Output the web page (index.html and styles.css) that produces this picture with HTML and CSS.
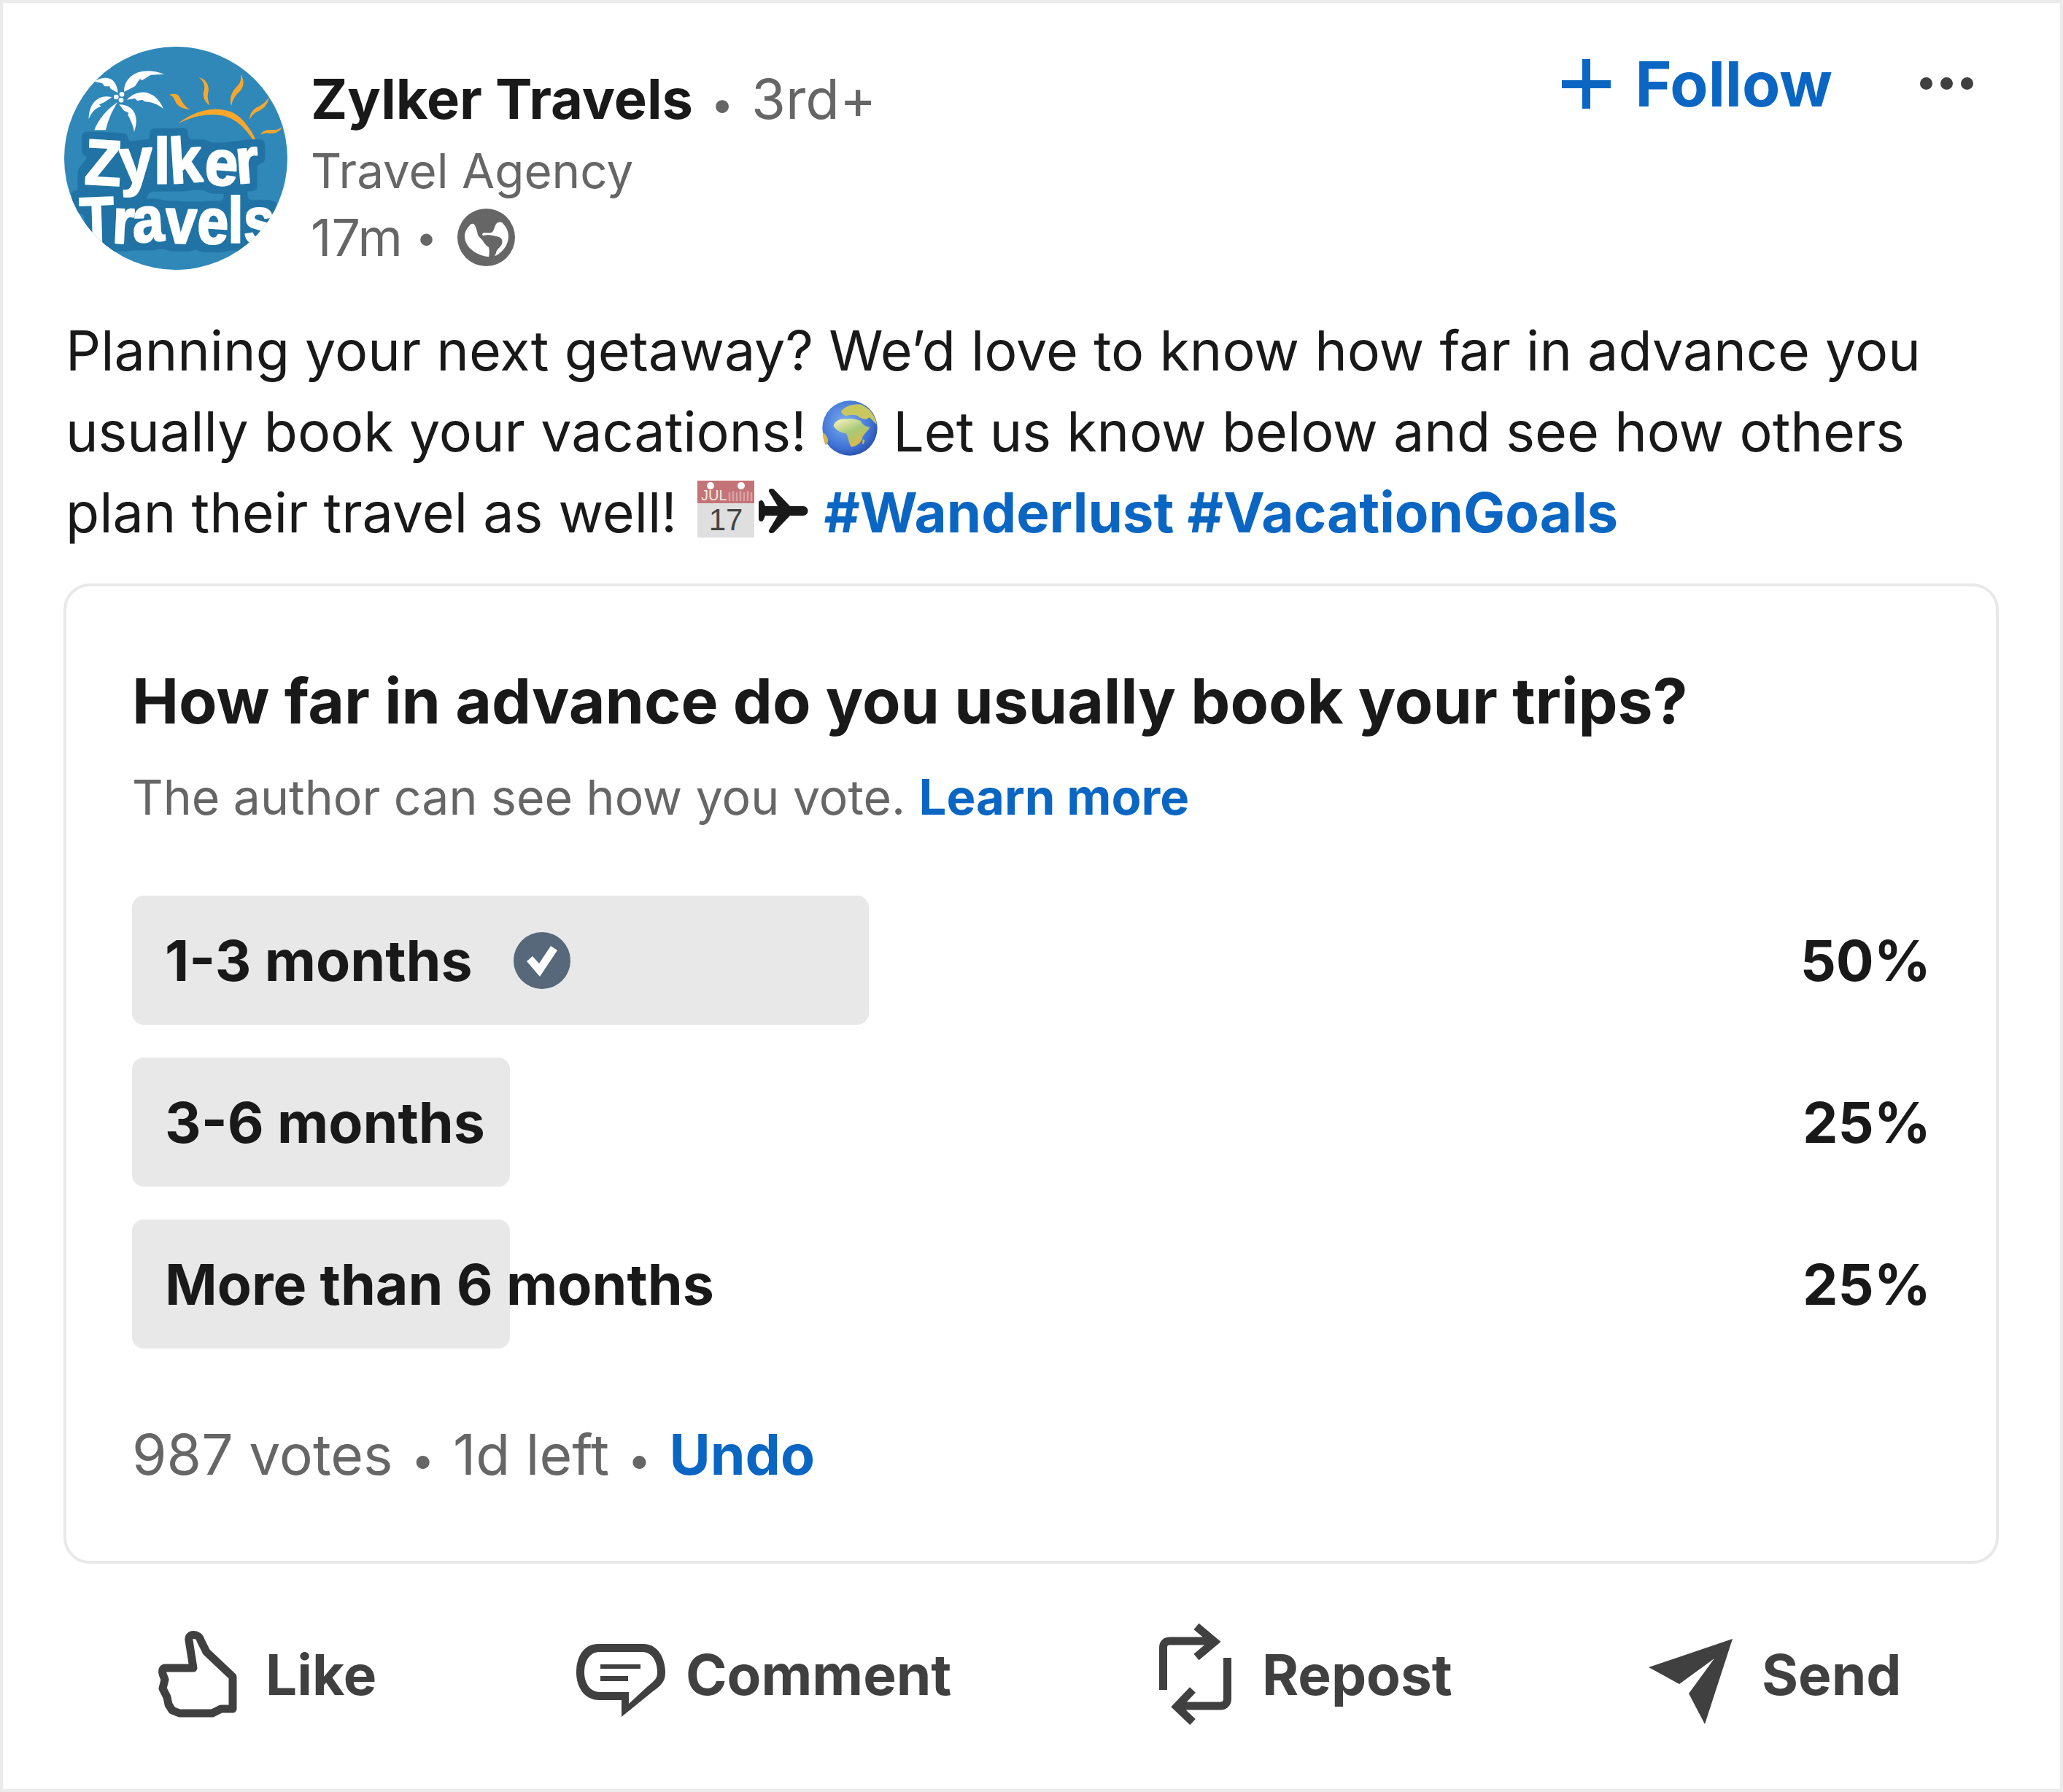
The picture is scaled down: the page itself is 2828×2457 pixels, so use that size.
FILE: index.html
```html
<!DOCTYPE html>
<html lang="en">
<head>
<meta charset="utf-8">
<title>Zylker Travels poll</title>
<link rel="stylesheet" href="styles.css">
</head>
<body>
<article class="card">
  <header class="head">
    <svg class="avatar" viewBox="84 72 918 918" aria-label="Zylker Travels logo">
      <defs>
        <clipPath id="disc"><circle cx="543" cy="531" r="459"/></clipPath>
        <filter id="chunky" filterUnits="userSpaceOnUse" x="0" y="300" width="1100" height="800" color-interpolation-filters="sRGB">
          <feMorphology in="SourceAlpha" operator="dilate" radius="4" result="fat"/>
          <feMorphology in="SourceAlpha" operator="dilate" radius="34" result="wide"/>
          <feGaussianBlur in="wide" stdDeviation="9" result="soft"/>
          <feComponentTransfer in="soft" result="halo"><feFuncA type="linear" slope="6" intercept="-2.5"/></feComponentTransfer>
          <feFlood flood-color="#2073a4" result="dark"/>
          <feComposite in="dark" in2="halo" operator="in" result="outline"/>
          <feFlood flood-color="#ffffff" result="light"/>
          <feComposite in="light" in2="fat" operator="in" result="face"/>
          <feMerge><feMergeNode in="outline"/><feMergeNode in="face"/></feMerge>
        </filter>
      </defs>
      <circle class="logo-bg" cx="543" cy="531" r="459"/>
      <g clip-path="url(#disc)">
        <g class="logo-white">
          <path d="M330 258C330 190 400 150 495 185L440 188 405 210 395 205 375 235Z"/>
          <path d="M305 262C300 210 270 180 205 215L240 222 250 235 270 235 275 245Z"/>
          <path d="M280 280C230 265 185 300 185 370 195 345 210 325 235 318L228 310 250 300Z"/>
          <path d="M342 290C390 240 460 250 492 327 470 310 440 298 415 298L405 290 385 295 375 285Z"/>
          <path d="M310 310C370 310 395 360 372 422 368 395 355 370 345 350L350 345 330 335Z"/>
          <path d="M303 300C260 330 225 370 208 415L255 415C265 370 280 340 303 300Z"/>
          <circle cx="298" cy="279" r="10"/><circle cx="321" cy="268" r="10"/><circle cx="318" cy="292" r="10"/>
        </g>
        <g class="logo-sun">
          <path d="M552 388C620 335 700 315 770 340 815 358 850 410 872 455L860 455C830 410 790 365 730 355 670 345 610 360 552 388Z"/>
          <path d="M515 270C560 255 560 290 570 300 580 315 590 325 602 330 575 330 550 320 540 295 535 280 525 272 515 270Z"/>
          <path d="M638 198C670 205 685 240 675 265 672 285 678 300 682 313 660 300 650 270 660 250 665 225 650 208 638 198Z"/>
          <path d="M810 185C830 215 820 245 800 262 785 275 775 295 772 315 760 285 775 255 795 235 810 220 812 205 810 185Z"/>
          <path d="M925 280C925 310 900 330 880 338 865 345 855 355 847 372 845 345 865 325 890 315 905 305 918 295 925 280Z"/>
          <path d="M982 400C970 425 945 432 925 428 912 426 900 430 892 434 900 415 925 412 945 415 960 415 972 410 982 400Z"/>
        </g>
        <text class="logo-word" x="150" y="878" textLength="800" lengthAdjust="spacingAndGlyphs" rotate="-2 3 -4 2 3 0 0">Travels</text>
        <text class="logo-word" x="165" y="636" textLength="725" lengthAdjust="spacingAndGlyphs" rotate="3 -3 0 -4 4 -5">Zylker</text>
      </g>
    </svg>
    <div class="who">
      <div class="name"><strong>Zylker Travels</strong><span class="sep">•</span><span class="degree">3rd+</span></div>
      <div class="role">Travel Agency</div>
      <div class="time">17m<span class="sep small">•</span>
        <svg class="earth" viewBox="0 0 79 79"><path fill-rule="evenodd" d="M39.500 0a39.500 39.500 0 1 0 0 79 39.500 39.500 0 0 0 0-79ZM17 23c2-3 5-3 7 0 2 4 3 8 4 13 2 4 6 6 8 10 2 3 4 5 7 7 1 4 1 9 0 13C27 65 10 53 10 38c0-6 3-11 7-15Zm37-3c3-2 7-2 8 0 5 5 8 11 8 18 0 10-6 20-16 26l-3 1 2-4c0-3 2-5 5-8 3-3 5-8 2-12-3-3-7-3-11-4-4-1-10-1-14 0-2-2 0-4 3-4 4 0 8 1 10-1 3-3 2-7 6-12Z"/></svg>
      </div>
    </div>
    <button class="follow">
      <svg class="plus" viewBox="0 0 67 68"><path d="M28 0h11v29h28v11H39v28H28V40H0V29h28Z"/></svg>Follow
    </button>
    <svg class="more" viewBox="0 0 73 17"><circle cx="8.500" cy="8.500" r="8.500"/><circle cx="36.500" cy="8.500" r="8.500"/><circle cx="64.500" cy="8.500" r="8.500"/></svg>
  </header>

  <div class="post">
    <p class="line">Planning your next getaway? We’d love to know how far in advance you</p>
    <p class="line">usually book your vacations!
    <svg class="emoji globe" viewBox="692 95 228 230">
      <defs>
        <radialGradient id="sea" cx="42%" cy="40%" r="64%"><stop offset="0" stop-color="#7fb0ee"/><stop offset=".72" stop-color="#3f72d6"/><stop offset="1" stop-color="#2a4fa8"/></radialGradient>
        <linearGradient id="land" x1="0" y1="0" x2=".6" y2="1"><stop offset="0" stop-color="#fdf8c0"/><stop offset=".55" stop-color="#a8c878"/><stop offset="1" stop-color="#dcb94a"/></linearGradient>
      </defs>
      <circle cx="806" cy="210" r="114" fill="url(#sea)"/>
      <path fill="url(#land)" d="M738 200C745 180 765 170 790 172 810 168 830 172 850 180 858 195 870 205 890 205 880 225 862 235 858 250 855 270 830 288 812 288 800 270 800 245 790 232 770 228 750 222 738 200Z"/>
      <path fill="#c8c85e" d="M770 140C785 120 820 108 850 112 885 125 910 155 918 195 905 185 895 170 885 165 875 180 860 170 845 165 835 150 800 155 790 160 780 155 770 150 770 140Z"/>
      <path fill="#d6b84c" d="M694 228C705 232 715 250 716 262 712 275 708 285 704 278 697 262 693 245 694 228Z"/>
      <path fill="#d6b84c" d="M860 256l8 4-5 16-6-2Z"/>
    </svg>
    Let us know below and see how others</p>
    <p class="line">plan their travel as well!
    <svg class="emoji cal" viewBox="0 0 78 78">
      <rect width="78" height="78" fill="#dfdfdf"/><rect width="78" height="31" fill="#c47378"/>
      <circle cx="18" cy="7" r="5" fill="#fff"/><circle cx="60" cy="7" r="5" fill="#fff"/>
      <text class="cal-month" x="5" y="27">JUL</text>
      <path d="M44 28V16M49 28V14M54 28V16M59 28V14M64 28V16M69 28V14M74 28V16" stroke="#d9a3a5" stroke-width="2.500"/>
      <text class="cal-day" x="39" y="68">17</text>
    </svg><svg class="emoji plane" viewBox="0 0 69 63"><path d="M2 18C4 16 7 17 8 20L10 25H27L15 5C14 1 19 0 22 2L44 25H62C66 25 68.500 28 68.500 31.500 68.500 35 66 38 62 38H44L22 61C19 63 14 62 15 58L27 38H10L8 43C7 46 4 47 2 45 1 44 1 43 1 42V21C1 20 1 19 2 18Z"/></svg>
    <a class="tag">#Wanderlust #VacationGoals</a></p>
  </div>

  <section class="poll">
    <h2 class="question">How far in advance do you usually book your trips?</h2>
    <p class="note">The author can see how you vote. <a class="link">Learn more</a></p>
    <div class="options">
      <div class="option">
        <span class="fill" style="width:1010px"></span>
        <span class="label">1-3 months</span>
        <svg class="check" viewBox="0 0 78 78"><circle cx="39" cy="39" r="39"/><path d="M18 40l8-7 9 10 16-24 9 6-24 36Z"/></svg>
        <span class="pct">50%</span>
      </div>
      <div class="option">
        <span class="fill" style="width:518px"></span>
        <span class="label">3-6 months</span>
        <span class="pct">25%</span>
      </div>
      <div class="option">
        <span class="fill" style="width:518px"></span>
        <span class="label">More than 6 months</span>
        <span class="pct">25%</span>
      </div>
    </div>
    <p class="votes">987 votes<span class="sep">•</span>1d left<span class="sep">•</span><a class="link">Undo</a></p>
  </section>

  <footer class="actions">
    <div class="action">
      <svg class="ic-like" viewBox="0 0 108 118"><path d="M47 50 41 12C39 2 55 2 57 12L65 28 101 62V106H85L73 112H28L18 108 13 100 11 90 5 78 8 66 5 58C4 53 5 50 9 50Z"/></svg>
      <span>Like</span>
    </div>
    <div class="action">
      <svg class="ic-comment" viewBox="0 0 122 100"><path fill-rule="evenodd" d="M30 0H92C112 0 122 20 122 39 122 50 118 56 105 65L62 100V77H32C10 77 0 58 0 39 0 18 10 0 30 0ZM32 11C18 11 11 24 11 39 11 52 18 66 32 66H72V82L98 58C108 50 111 47 111 39 111 24 104 11 90 11ZM33 28H88V34H33ZM33 44H71V51H33Z"/></svg>
      <span>Comment</span>
    </div>
    <div class="action">
      <svg class="ic-repost" viewBox="0 0 99 133"><path d="M5.500 88V30C5.500 24 9 21 15 21H72M51 1 76 22 51 43M93.500 44V100C93.500 106 90 110 84 110H26M46 88 24 111 46 132"/></svg>
      <span>Repost</span>
    </div>
    <div class="action">
      <svg class="ic-send" viewBox="0 0 115 117"><path d="M115 0 0 39 42 62 90 27 55 75 77 117Z"/></svg>
      <span>Send</span>
    </div>
  </footer>
</article>
</body>
</html>
```

FILE: styles.css
```css
* { box-sizing: border-box; }
html, body { margin: 0; padding: 0; }
body { background: #ebebeb; font-family: Inter, "Liberation Sans", sans-serif; color: #191919; }

.card {
  width: 2828px; height: 2457px;
  background: #fff;
  border: 4px solid #ebebeb;
  padding: 60px 84px 0;
}

.head { display: flex; align-items: flex-start; }
.avatar { width: 306px; height: 306px; flex: none; }
.logo-bg { fill: #3088b9; }
.logo-white { fill: #fff; }
.logo-sun { fill: #f9a72b; }
.logo-word {
  font-family: "Liberation Sans", sans-serif; font-weight: 700; font-size: 265px;
  fill: #fff; filter: url(#chunky);
}

.who { margin-left: 32px; padding-top: 25px; }
.name { font-size: 76px; line-height: 92px; color: #666; display: flex; align-items: baseline; }
.name strong { font-weight: 700; font-size: 75.8px; color: #191919; }
.sep { margin: 0 24px; color: #666; font-size: .75em; }
.degree { font-weight: 400; }
.role { font-size: 65.5px; line-height: 79px; color: #666; margin-top: 6px; }
.time { font-size: 70px; line-height: 79px; color: #666; margin-top: 12px; display: flex; align-items: center; }
.sep.small { margin: 0 28px 0 18px; }
.earth { width: 79px; height: 79px; fill: #666; }

.follow {
  margin-left: auto; margin-top: 1px;
  display: flex; align-items: center; gap: 34px;
  background: none; border: 0; padding: 0;
  font: 700 85.5px/100px Inter, "Liberation Sans", sans-serif; color: #0a66c2;
}
.plus { width: 67px; height: 68px; fill: #0a66c2; }
.more { width: 73px; height: 17px; fill: #404040; margin: 42px 35px 0 120px; flex: none; }

.post { margin: 55px 0 0; padding-left: 2px; font-size: 75.4px; line-height: 111px; color: #191919; }
.line { margin: 0; white-space: nowrap; }
.emoji { display: inline-block; }
.globe { width: 76px; height: 76px; vertical-align: -6px; }
.cal { width: 78px; height: 78px; margin-left: 7px; vertical-align: -7px; }
.plane { width: 69px; height: 63px; margin-left: 5px; vertical-align: -2px; fill: #191919; }
.cal-month { font: 500 20px "Liberation Sans", sans-serif; fill: #eed; }
.cal-day { font: 400 42px "Liberation Sans", sans-serif; fill: #444; text-anchor: middle; }
.tag { color: #0a66c2; font-weight: 700; font-size: 76.2px; }

.poll {
  margin: 42px 0 0 -1px; height: 1344px;
  border: 4px solid #e8e8e8; border-radius: 36px;
  padding: 107px 89px 0 90px;
}
.question { margin: 0; font-size: 85.8px; line-height: 100px; font-weight: 700; color: #191919; }
.note { margin: 42px 0 0; font-size: 66.1px; line-height: 80px; color: #666; }
.note .link { font-size: 67px; }
.link { color: #0a66c2; font-weight: 700; }

.options { margin-top: 95px; display: flex; flex-direction: column; gap: 45px; }
.option {
  position: relative; height: 177px;
  display: flex; align-items: center; padding: 0 0 0 45px;
  font-size: 77px; font-weight: 700; color: #191919;
}
.fill { position: absolute; left: 0; top: 0; bottom: 0; background: #e8e8e8; border-radius: 16px; }
.label, .pct, .check { position: relative; }
.check { width: 78px; height: 78px; margin-left: 56px; fill: #56687a; }
.check path { fill: #fff; }
.pct { margin-left: auto; }

.votes { margin: 100px 0 0; font-size: 76.8px; line-height: 92px; color: #666; }
.votes .sep { margin: 0 25px; }

.actions {
  margin-top: 85px; margin-left: 130px;
  display: grid; grid-template-columns: 572px 799px 671px auto;
  font-size: 76.5px; font-weight: 700; color: #404040;
}
.action { display: flex; align-items: center; height: 133px; }
.ic-like { width: 108px; height: 118px; margin-right: 38px; fill: none; stroke: #404040; stroke-width: 11px; stroke-linejoin: round; overflow: visible; }
.ic-comment { width: 122px; height: 100px; margin: 16px 28px 0 0; fill: #404040; }
.ic-repost { width: 99px; height: 133px; margin-right: 42px; fill: none; stroke: #404040; stroke-width: 11px; overflow: visible; }
.ic-send { width: 115px; height: 117px; margin: 20px 40px 0 0; fill: #404040; }
```
